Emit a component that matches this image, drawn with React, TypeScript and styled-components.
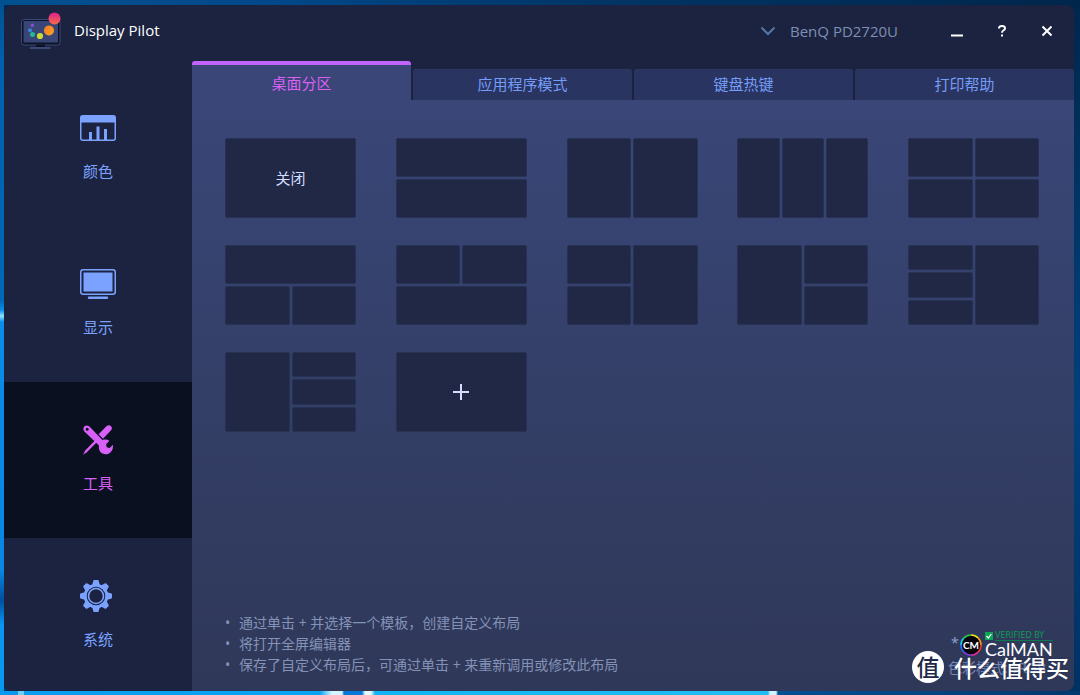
import React, { useState } from 'react';
import styled, { createGlobalStyle } from 'styled-components';

const GlobalStyle = createGlobalStyle`
  *, *::before, *::after { box-sizing: border-box; }
  body {
    margin: 0;
    font-family: "Noto Sans", "Noto Sans CJK SC", sans-serif;
    font-size: 15px;
    line-height: 20px;
    color: #fff;
  }
  button, select { font: inherit; color: inherit; border: 0; background: none; padding: 0; margin: 0; }
`;

const Desktop = styled.div`
  position: relative;
  min-height: 100vh;
  padding: 5px 6px 4px 4px;
  display: flex;
  background:
    linear-gradient(90deg, #0a98ee 0 18px, #6fd0f0 18px 24px, #0a9cf0 24px, #08a4f2 320px, #d8f6ff 332px 342px, #0878d8 344px 362px, #e6fbff 365px 371px, #10b4f4 375px, #22bdf2 768px, #d0f4ff 770px 776px, #024f92 778px, #013a6e) bottom / 100% 4px no-repeat,
    linear-gradient(180deg, #00508f 0, #0060ae 60px, #0068b8 300px, #0a8ce8 310px, #90e4ff 316px, #0a8ce8 322px, #0a86e4 570px, #004f9c 600px, #0a96f4 625px, #0a98ee) left / 4px 100% no-repeat,
    linear-gradient(90deg, #00518f, #00488a 25%, #003566 55%, #00264c) top / 100% 5px no-repeat,
    linear-gradient(180deg, #00264c, #003a6e 40%, #00407c 60%, #003262);
`;

const Window = styled.div`
  flex: 1;
  min-width: 0;
  display: flex;
  flex-direction: column;
  background: #1b2340;
  border-radius: 8px;
  overflow: hidden;
`;

const TitleBar = styled.header`
  height: 56px;
  padding: 0 5px 4px 17px;
  display: flex;
  align-items: center;
`;

const Title = styled.h1`
  margin: 0 auto 2px 13px;
  font-size: 15px;
  font-weight: 400;
  font-family: "Open Sans", "Noto Sans", sans-serif;
`;

const DevicePicker = styled.label`
  display: flex;
  align-items: center;
  gap: 14px;
  margin-right: 35px;
  color: #7f8eb4;
`;

const DeviceSelect = styled.select`
  appearance: none;
  font-family: "Open Sans", "Noto Sans", sans-serif;
`;

const WindowButton = styled.button`
  width: 45px;
  height: 32px;
  display: grid;
  place-items: center;
`;

const Main = styled.div`
  flex: 1;
  display: grid;
  grid-template-columns: 188px minmax(0, 1fr);
`;

const Sidebar = styled.nav`
  padding-top: 9px;
  display: flex;
  flex-direction: column;
`;

const NavItem = styled.button<{ $active: boolean }>`
  height: 156px;
  padding-top: 40px;
  display: flex;
  flex-direction: column;
  align-items: center;
  gap: 15px;
  color: ${p => (p.$active ? '#d860f8' : '#7ba2ff')};
  background: ${p => (p.$active ? '#0b1021' : 'transparent')};
  &:last-child { height: auto; flex: 1; }
`;

const NavIcon = styled.span`
  height: 36px;
  display: grid;
  place-items: center;
`;

const Content = styled.main`
  display: flex;
  flex-direction: column;
`;

const Tabs = styled.div`
  height: 39px;
  display: grid;
  grid-template-columns: repeat(4, minmax(0, 1fr));
  column-gap: 2px;
  align-items: end;
`;

const Tab = styled.button<{ $active: boolean }>`
  height: ${p => (p.$active ? 39 : 31)}px;
  border-top: ${p => (p.$active ? '4px solid #c264fa' : '1px solid #2c3763')};
  border-radius: 3px 3px 0 0;
  padding-top: ${p => (p.$active ? 4 : 0)}px;
  padding-bottom: 3px;
  color: ${p => (p.$active ? '#dc60f4' : '#759cf8')};
  background: ${p => (p.$active ? '#394677' : '#293460')};
`;

const Panel = styled.section`
  flex: 1;
  display: flex;
  flex-direction: column;
  justify-content: space-between;
  padding: 38px 35px 13px 33px;
  background: linear-gradient(180deg, #394677, #2f3858);
`;

const TileGrid = styled.div`
  display: grid;
  grid-template-columns: repeat(5, 131px);
  justify-content: space-between;
  row-gap: 27px;
`;

const Tile = styled.button<{ $areas: string }>`
  height: 80px;
  display: grid;
  grid-template: ${p => p.$areas};
  gap: 2px;
  border-radius: 2px;
  color: #d3ddff;
`;

const Zone = styled.span<{ $area: string }>`
  grid-area: ${p => p.$area};
  display: grid;
  place-items: center;
  background: #202846;
  border: 1px solid #273154;
  border-radius: 2px;
`;

const Footer = styled.div`
  display: flex;
  justify-content: space-between;
  align-items: flex-end;
`;

const Hints = styled.ul`
  margin: 0 0 3px;
  padding: 0 0 0 14px;
  font-size: 14px;
  line-height: 21px;
  color: #8492b8;
  list-style: none;
`;

const Hint = styled.li`
  display: flex;
  &::before { content: "•"; width: 14px; margin-left: -14px; }
`;

const Certification = styled.div`
  width: 106px;
  margin-right: -15px;
  color: #8c9cd0;
  font-size: 14px;
`;

const LogoRow = styled.div`
  display: flex;
  align-items: center;
  gap: 3px;
  padding-left: 3px;
`;

const Asterisk = styled.span`
  width: 6px;
  padding-bottom: 4px;
`;

const CalmanWords = styled.div`
  display: flex;
  flex-direction: column;
  color: #fff;
`;

const Verified = styled.span`
  display: flex;
  align-items: center;
  gap: 2px;
  white-space: nowrap;
  font-family: "DejaVu Sans", sans-serif;
  font-size: 8px;
  line-height: 9px;
  color: #0d9a55;
`;

const VerifiedText = styled.span`
  flex: 1;
  border-bottom: 1px solid #0d7a4c;
`;

const Wordmark = styled.span`
  font-family: Lato, sans-serif;
  font-size: 18px;
  line-height: 17px;
`;

const ColorMode = styled.div`
  white-space: nowrap;
  opacity: 0.8;
`;

const Watermark = styled.div`
  position: absolute;
  right: 11px;
  bottom: 12px;
  display: flex;
  align-items: center;
  gap: 10px;
  font-size: 23px;
  line-height: 32px;
  font-weight: 500;
  font-family: "Noto Sans CJK SC", sans-serif;
  text-shadow: 0 0 2px #222a48;
`;

const Seal = styled.span`
  width: 32px;
  height: 32px;
  border-radius: 50%;
  background: #fff;
  color: #202846;
  font-size: 23px;
  text-align: center;
  line-height: 31px;
  text-shadow: none;
`;

const AppLogo = () => (
  <svg width="40" height="38" viewBox="0 0 40 38" aria-hidden="true">
    <defs>
      <linearGradient id="pink" x1="0" y1="0" x2="0" y2="1">
        <stop offset="0" stopColor="#e0208c" /><stop offset="1" stopColor="#f86a48" />
      </linearGradient>
      <linearGradient id="orange" x1="0" y1="0" x2="1" y2="1">
        <stop offset="0" stopColor="#fb7a2c" /><stop offset="1" stopColor="#f8a41c" />
      </linearGradient>
    </defs>
    <rect x="0.5" y="7.500" width="38.500" height="25.500" rx="2.500" fill="#0c1226" stroke="#3c4876" />
    <rect x="2.500" y="9" width="34.500" height="21.500" fill="#3a4577" />
    <path d="M15 32.500h9v3h-9z" fill="#0c1226" />
    <path d="M9 36h20.500" stroke="#3c4876" strokeWidth="2" />
    <circle cx="11.300" cy="13.300" r="1.700" fill="#8c4fd0" />
    <circle cx="9" cy="18.300" r="2" fill="#3b82dc" />
    <circle cx="11.500" cy="22.600" r="2.500" fill="#22b894" />
    <circle cx="19" cy="24" r="3.100" fill="#c8dc32" />
    <circle cx="28" cy="18.400" r="5" fill="url(#orange)" />
    <circle cx="33.500" cy="6.500" r="6" fill="url(#pink)" />
  </svg>
);

const ColorIcon = () => (
  <svg width="36" height="26" viewBox="0 0 36 26" aria-hidden="true">
    <rect x="0.75" y="0.75" width="34.500" height="24.500" rx="2" fill="none" stroke="currentColor" strokeWidth="1.500" />
    <path d="M1 1h34v6.500H1zM9 17h3v8H9zM16.500 11.500h3V25h-3zM24 14h3v11h-3z" fill="currentColor" />
  </svg>
);

const DisplayIcon = () => (
  <svg width="36" height="30" viewBox="0 0 36 30" aria-hidden="true">
    <rect x="0.75" y="0.75" width="34.500" height="24.500" rx="2.500" fill="none" stroke="currentColor" strokeWidth="1.500" />
    <path d="M3.500 3.500h29v19h-29z" fill="currentColor" />
    <path d="M9 28.700h18" stroke="currentColor" strokeWidth="2.400" strokeLinecap="round" />
  </svg>
);

const ToolsIcon = () => (
  <svg width="30" height="30" viewBox="0 0 30 30" aria-hidden="true" fill="currentColor">
    <path d="M15.600 9.300 23.400 1.300c1.300-1.300 3.200-1.400 4.500-.2 1.300 1.300 1.200 3-.1 4.500l-7.800 8.100z" />
    <path d="m12.200 15.300 1.800 1.800L3.800 27.200 0 29.800l2.200-4.200z" />
    <path
      fillRule="evenodd"
      d="M1.200 1.400C2.600 0 4.700.1 6.200 1.300l13.200 13.600c2.400-.7 5.100-.4 7 .9l-3.300 3.400.6 3 3 .7 3.200-3.100c.3 2.900-.3 5.200-2.100 7.200-2.200 2.400-5.300 3-8.300 1.500-2.800-1.500-4.200-4.500-3.500-8L1.400 6.600C0 5 0 2.800 1.200 1.400zM4.200 2.700a1.500 1.500 0 1 0 0 3 1.500 1.500 0 0 0 0-3z"
    />
  </svg>
);

const GearIcon = () => (
  <svg width="36" height="34" viewBox="-16 -17 36 34" aria-hidden="true">
    <g fill="currentColor">
      {[0, 45, 90, 135, 180, 225, 270, 315].map(a => (
        <path key={a} d="M-4-10-2.800-15Q-2.600-16-1.600-16H1.600Q2.600-16 2.800-15L4-10z" transform={`rotate(${a})`} />
      ))}
      <circle r="12.300" />
    </g>
    <circle r="9.300" fill="#1b2340" />
    <circle r="7.500" fill="none" stroke="currentColor" strokeWidth="1.600" />
  </svg>
);

const BadgeDrawing = styled.svg`
  flex: none;
`;

const CalmanBadge = () => (
  <BadgeDrawing width="22" height="22" viewBox="0 0 22 22" aria-hidden="true">
    <circle cx="11" cy="11" r="10" fill="#05060c" />
    <g fill="none" strokeWidth="1.600">
      {['#f2e21c', '#f59a1c', '#ee3a2c', '#e0289c', '#7a3ce0', '#2c6cf0', '#1cc8e0', '#28c84c'].map((c, i) => (
        <path key={c} d="M11 1a10 10 0 0 1 7.100 2.900" stroke={c} transform={`rotate(${i * 45} 11 11)`} />
      ))}
    </g>
    <text x="11" y="15" textAnchor="middle" fontFamily="Lato, sans-serif" fontWeight="700" fontSize="10" fill="#fff">CM</text>
  </BadgeDrawing>
);

const navigation = [
  { label: '颜色', Icon: ColorIcon },
  { label: '显示', Icon: DisplayIcon },
  { label: '工具', Icon: ToolsIcon },
  { label: '系统', Icon: GearIcon },
];

const tabs = ['桌面分区', '应用程序模式', '键盘热键', '打印帮助'];

const layouts = [
  { name: '上下', areas: '"a" 1fr "b" 1fr / 1fr', zones: 'ab' },
  { name: '左右', areas: '"a b" 1fr / 1fr 1fr', zones: 'ab' },
  { name: '三列', areas: '"a b c" 1fr / 1fr 1fr 1fr', zones: 'abc' },
  { name: '四格', areas: '"a b" 1fr "c d" 1fr / 1fr 1fr', zones: 'abcd' },
  { name: '上一下二', areas: '"a a" 1fr "b c" 1fr / 1fr 1fr', zones: 'abc' },
  { name: '上二下一', areas: '"a b" 1fr "c c" 1fr / 1fr 1fr', zones: 'abc' },
  { name: '左二右一', areas: '"a b" 1fr "c b" 1fr / 1fr 1fr', zones: 'abc' },
  { name: '左一右二', areas: '"a b" 1fr "a c" 1fr / 1fr 1fr', zones: 'abc' },
  { name: '左三右一', areas: '"a d" 1fr "b d" 1fr "c d" 1fr / 1fr 1fr', zones: 'abcd' },
  { name: '左一右三', areas: '"a b" 1fr "a c" 1fr "a d" 1fr / 1fr 1fr', zones: 'abcd' },
];

const single = '"a" 1fr / 1fr';

const hints = [
  '通过单击 + 并选择一个模板，创建自定义布局',
  '将打开全屏编辑器',
  '保存了自定义布局后，可通过单击 + 来重新调用或修改此布局',
];

export default function App() {
  const [page, setPage] = useState(2);
  const [tab, setTab] = useState(0);

  return (
    <>
      <GlobalStyle />
      <Desktop>
        <Window>
          <TitleBar>
            <AppLogo />
            <Title>Display Pilot</Title>
            <DevicePicker>
              <svg width="16" height="10" viewBox="0 0 16 10" aria-hidden="true">
                <path d="m1.500 1.500 6.500 6.500 6.500-6.500" fill="none" stroke="#5577a8" strokeWidth="2" />
              </svg>
              <DeviceSelect aria-label="BenQ PD2720U">
                <option>BenQ PD2720U</option>
              </DeviceSelect>
            </DevicePicker>
            <WindowButton aria-label="最小化">
              <svg width="14" height="12" viewBox="0 0 14 12"><path d="M1 10.500h12" stroke="#fff" strokeWidth="2" /></svg>
            </WindowButton>
            <WindowButton aria-label="帮助">
              <svg width="10" height="12" viewBox="0 0 10 12" fill="none" stroke="#fff" strokeWidth="2">
                <path d="M2 3.400C2 1.800 3.300 1 5 1s3 .9 3 2.400C8 5.400 5 5.200 5 7.800M5 9.500v2" />
              </svg>
            </WindowButton>
            <WindowButton aria-label="关闭窗口">
              <svg width="12" height="12" viewBox="0 0 12 12"><path d="m1.500 1.500 9 9m0-9-9 9" stroke="#fff" strokeWidth="2" /></svg>
            </WindowButton>
          </TitleBar>
          <Main>
            <Sidebar>
              {navigation.map(({ label, Icon }, i) => (
                <NavItem key={label} $active={page === i} onClick={() => setPage(i)}>
                  <NavIcon><Icon /></NavIcon>
                  {label}
                </NavItem>
              ))}
            </Sidebar>
            <Content>
              <Tabs role="tablist">
                {tabs.map((name, i) => (
                  <Tab key={name} role="tab" aria-selected={tab === i} $active={tab === i} onClick={() => setTab(i)}>
                    {name}
                  </Tab>
                ))}
              </Tabs>
              <Panel>
                <TileGrid>
                  <Tile $areas={single}><Zone $area="a">关闭</Zone></Tile>
                  {layouts.map(({ name, areas, zones }) => (
                    <Tile key={name} aria-label={name} $areas={areas}>
                      {[...zones].map(z => <Zone key={z} $area={z} />)}
                    </Tile>
                  ))}
                  <Tile $areas={single} aria-label="添加">
                    <Zone $area="a">
                      <svg width="18" height="18" viewBox="0 0 18 18"><path d="M9 1v16M1 9h16" stroke="#d3ddff" strokeWidth="2" /></svg>
                    </Zone>
                  </Tile>
                </TileGrid>
                <Footer>
                  <Hints>
                    {hints.map(text => <Hint key={text}>{text}</Hint>)}
                  </Hints>
                  <Certification>
                    <LogoRow>
                      <Asterisk>*</Asterisk>
                      <CalmanBadge />
                      <CalmanWords>
                        <Verified>
                          <svg width="8" height="8" viewBox="0 0 8 8" aria-hidden="true">
                            <path d="M0 0h8v8H0z" fill="#0aa656" />
                            <path d="m1.500 4 1.800 2 3-4" fill="none" stroke="#fff" strokeWidth="1.200" />
                          </svg>
                          <VerifiedText>VERIFIED BY</VerifiedText>
                        </Verified>
                        <Wordmark>CalMAN</Wordmark>
                      </CalmanWords>
                    </LogoRow>
                    <ColorMode>色彩模式: sRGB</ColorMode>
                  </Certification>
                </Footer>
              </Panel>
            </Content>
          </Main>
        </Window>
        <Watermark>
          <Seal>值</Seal>
          什么值得买
        </Watermark>
      </Desktop>
    </>
  );
}
